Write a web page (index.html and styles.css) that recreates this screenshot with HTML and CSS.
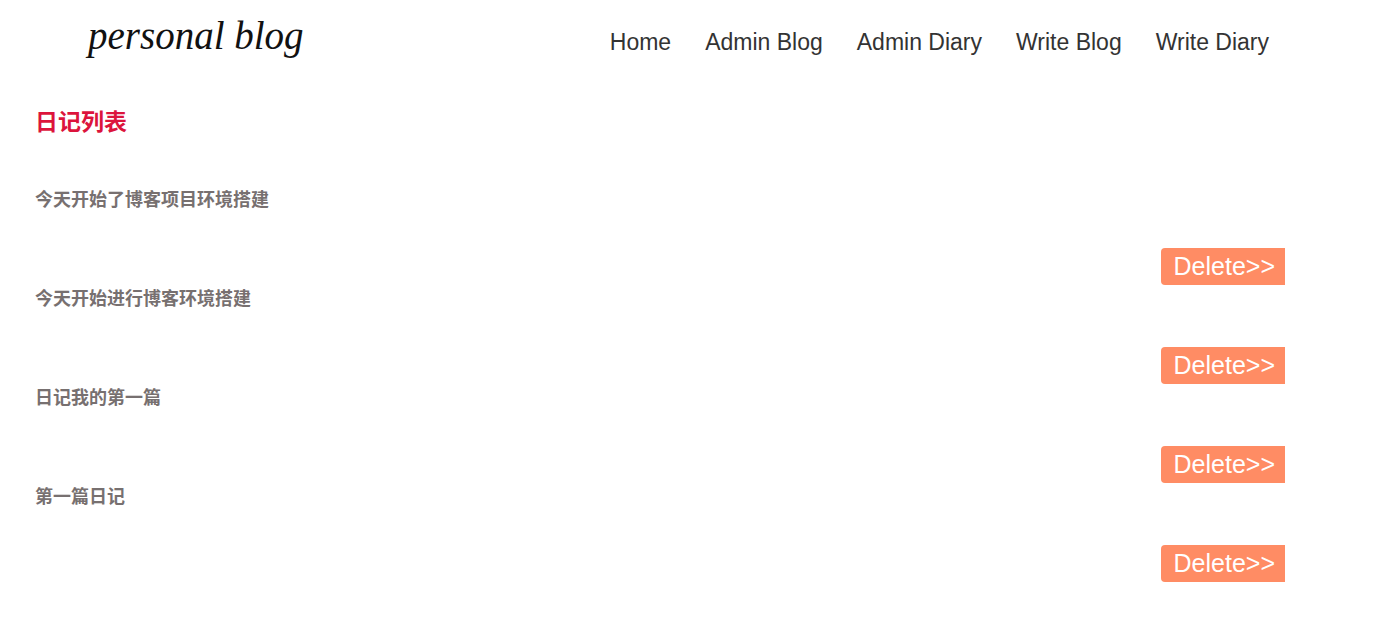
FILE: index.html
```html
<!DOCTYPE html>
<html lang="zh-CN">
<head>
<meta charset="utf-8">
<title>personal blog</title>
<link rel="stylesheet" href="styles.css">
</head>
<body>
<header class="header">
  <a class="logo" href="#">personal blog</a>
  <nav class="nav">
    <a href="#">Home</a>
    <a href="#">Admin Blog</a>
    <a href="#">Admin Diary</a>
    <a href="#">Write Blog</a>
    <a href="#">Write Diary</a>
  </nav>
</header>
<main class="diary">
  <h1 class="diary-title">日记列表</h1>
  <ul class="diary-list">
    <li class="entry"><h2 class="entry-title">今天开始了博客项目环境搭建</h2><button class="delete" type="button">Delete&gt;&gt;</button></li>
    <li class="entry"><h2 class="entry-title">今天开始进行博客环境搭建</h2><button class="delete" type="button">Delete&gt;&gt;</button></li>
    <li class="entry"><h2 class="entry-title">日记我的第一篇</h2><button class="delete" type="button">Delete&gt;&gt;</button></li>
    <li class="entry"><h2 class="entry-title">第一篇日记</h2><button class="delete" type="button">Delete&gt;&gt;</button></li>
  </ul>
</main>
</body>
</html>
```

FILE: styles.css
```css
* {
  box-sizing: border-box;
}

body {
  margin: 0;
  background: #fff;
  font-family: "Liberation Sans", Arial, "Noto Sans CJK SC", sans-serif;
}

.header {
  display: flex;
  align-items: flex-start;
  justify-content: space-between;
  padding: 12px 113px 0 88px;
}

.logo {
  color: #111;
  font-family: "Liberation Serif", serif;
  font-size: 39px;
  font-style: italic;
  line-height: 48px;
  text-decoration: none;
}

.nav {
  display: flex;
  gap: 34px;
}

.nav a {
  color: #333;
  font-size: 23px;
  line-height: 60px;
  text-decoration: none;
}

.diary {
  padding: 32px 97px 0 35px;
}

.diary-title {
  margin: 0 0 46px;
  color: #dc143c;
  font-size: 23px;
  line-height: 36px;
}

.diary-list {
  margin: 0;
  padding: 0;
  list-style: none;
}

.entry {
  display: flex;
  flex-direction: column;
  gap: 34px;
}

.entry-title {
  margin: 0;
  color: #777070;
  font-size: 18px;
  line-height: 28px;
}

.delete {
  align-self: flex-end;
  padding: 0 10px 0 13px;
  border: 0;
  border-radius: 4px 0 0 4px;
  background: #ff8c64;
  color: #fff;
  font-family: inherit;
  font-size: 25px;
  line-height: 37px;
}
```
